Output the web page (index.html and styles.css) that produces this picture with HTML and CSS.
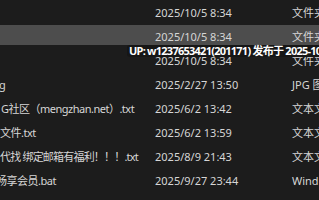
FILE: index.html
```html
<!DOCTYPE html>
<html lang="zh">
<head>
<meta charset="utf-8">
<link rel="stylesheet" href="styles.css">
</head>
<body>
<div class="list">
  <div class="row"><div class="name"></div><div class="date">2025/10/5 8:34</div><div class="type">文件夹</div></div>
  <div class="row sel"><div class="name"></div><div class="date">2025/10/5 8:34</div><div class="type">文件夹</div></div>
  <div class="row"><div class="name"></div><div class="date">2025/10/5 8:34</div><div class="type">文件夹</div></div>
  <div class="row"><div class="name"><span class="n n-g">g</span></div><div class="date">2025/2/27 13:50</div><div class="type">JPG 图片文件</div></div>
  <div class="row"><div class="name"><span class="n n-a">G社区（mengzhan.net）.txt</span></div><div class="date">2025/6/2 13:42</div><div class="type">文本文档</div></div>
  <div class="row"><div class="name"><span class="n n-b">文件.txt</span></div><div class="date">2025/6/2 13:59</div><div class="type">文本文档</div></div>
  <div class="row"><div class="name"><span class="n n-b n-tight">代找 绑定邮箱有福利！！！.txt</span></div><div class="date">2025/8/9 21:43</div><div class="type">文本文档</div></div>
  <div class="row"><div class="name"><span class="n n-c">畅享会员.bat</span></div><div class="date">2025/9/27 23:44</div><div class="type">Windows 批处理文件</div></div>
</div>
<div class="tip">UP: w1237653421(201171) 发布于 2025-10-05 08:34</div>
</body>
</html>
```
FILE: styles.css
```css
html, body {
  margin: 0;
  padding: 0;
  background: #1c1c1c;
  overflow: hidden;
  width: 319px;
  height: 200px;
}
body {
  font-family: "Noto Sans", "Noto Sans CJK SC", sans-serif;
  font-size: 11px;
  color: #d6d6d6;
  position: relative;
}
.list {
  display: flex;
  flex-direction: column;
}
.row {
  display: flex;
  height: 24px;
  align-items: center;
  white-space: nowrap;
  position: relative;
  overflow: hidden;
}
.row.sel::before {
  content: "";
  position: absolute;
  left: 0;
  right: 0;
  top: 1px;
  bottom: 3px;
  background: #4d4d4d;
  z-index: -1;
}
.row.sel { z-index: 0; }
.name {
  width: 155px;
  flex: none;
  overflow: hidden;
}
.n {
  display: inline-block;
  letter-spacing: -0.5px;
}
.n-tight { letter-spacing: -0.8px; }
.n-g { margin-left: -1px; }
.n-a { margin-left: 1px; }
.n-b { margin-left: 0; }
.n-c { margin-left: -4px; }
.date {
  width: 137px;
  flex: none;
}
.type {
  flex: none;
}
.tip {
  position: absolute;
  left: 127px;
  top: 45px;
  height: 12px;
  line-height: 12px;
  padding: 0 3px 0 2px;
  background: #161616;
  border-radius: 3px;
  color: #ffffff;
  font-weight: bold;
  font-size: 11px;
  letter-spacing: -0.75px;
  white-space: nowrap;
}
```
